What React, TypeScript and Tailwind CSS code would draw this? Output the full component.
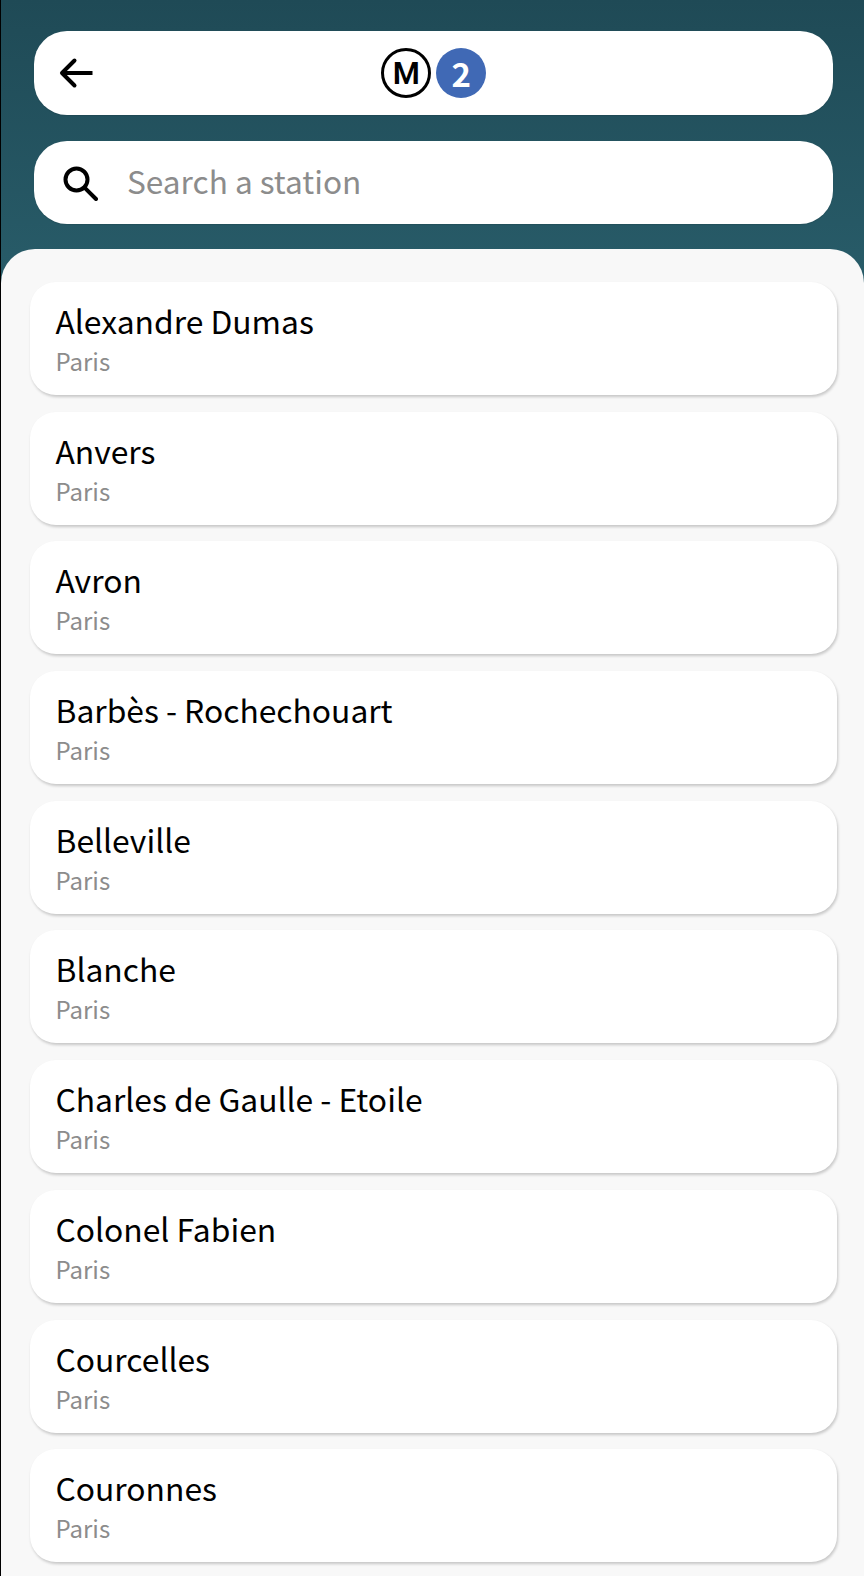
const stations = [
  'Alexandre Dumas',
  'Anvers',
  'Avron',
  'Barbès - Rochechouart',
  'Belleville',
  'Blanche',
  'Charles de Gaulle - Etoile',
  'Colonel Fabien',
  'Courcelles',
  'Couronnes',
];

const App = () => {
  return (
    <div className="flex h-[1576px] flex-col overflow-hidden border-l border-black bg-[#285c69] font-['Noto_Sans_CJK_SC','Noto_Sans',sans-serif]">
      <div className="-mb-[34px] bg-gradient-to-b from-[#1f4a56] to-[#285c69] pb-[59px]">
        <div className="flex flex-col gap-[26px] pt-[31px] pl-[33px] pr-[31px]">
          <div className="relative flex h-[84px] items-center justify-center rounded-[33px] bg-white shadow-[0_1px_1px_rgba(0,0,0,0.1)]">
            <button aria-label="Back" className="absolute left-[24.5px] top-[24px] text-black">
              <svg width="36" height="36" viewBox="0 0 36 36" fill="none" stroke="currentColor" strokeWidth="4" strokeLinecap="round" strokeLinejoin="round">
                <path d="M33.5 18H3" strokeLinecap="butt" />
                <path d="M15.5 5.5 3 18l12.5 12.5" />
              </svg>
            </button>
            <div className="flex items-center gap-[5px] pl-[0.5px]">
              <div className="flex h-[50px] w-[50px] items-center justify-center rounded-full border-[3px] border-black font-['Roboto',sans-serif] text-[31px] font-semibold leading-none text-black">
                M
              </div>
              <div className="flex h-[50px] w-[50px] items-center justify-center rounded-full bg-[#4069b5] text-[33px] font-bold leading-none text-white">
                2
              </div>
            </div>
          </div>
          <div className="flex h-[83px] items-center rounded-[33px] bg-white pl-[28px] shadow-[0_1px_1px_rgba(0,0,0,0.1)]">
            <svg width="36" height="36" viewBox="0 0 36 36" fill="none" stroke="#000" strokeWidth="4" strokeLinecap="round">
              <circle cx="14.5" cy="14.5" r="11" />
              <path d="m22.8 22.8 11.2 11.2" />
            </svg>
            <span className="ml-[29px] -mt-[4px] text-[31.6px] leading-none text-[#8c8c8c]">Search a station</span>
          </div>
        </div>
      </div>
      <div className="relative flex flex-1 flex-col gap-[16.7px] rounded-t-[34px] bg-[#f8f8f8] pt-[33px] pl-[29px] pr-[27px]">
        {stations.map((name) => (
          <div key={name} className="flex h-[113px] flex-col rounded-[26px] bg-white pl-[25.5px] pt-[17px] shadow-[1px_2px_3px_rgba(0,0,0,0.2)]">
            <div className="text-[31.8px] leading-[42px] text-black">{name}</div>
            <div className="mt-[3px] text-[24px] leading-[34px] text-[#8c8c8c]">Paris</div>
          </div>
        ))}
      </div>
    </div>
  );
};

export default App;
